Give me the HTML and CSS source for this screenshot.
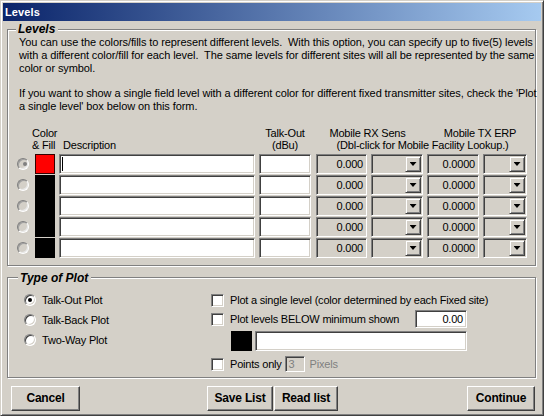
FILE: index.html
```html
<!DOCTYPE html>
<html>
<head>
<meta charset="utf-8">
<link rel="stylesheet" href="styles.css">
</head>
<body>
<div class="window">
  <div class="titlebar">Levels</div>

  <div class="group g-levels">
    <div class="legend">Levels</div>
    <div class="intro">
      <p>You can use the colors/fills to represent different levels.&nbsp; With this option, you can specify up to five(5) levels<br>with a different color/fill for each level.&nbsp; The same levels for different sites will all be represented by the same<br>color or symbol.</p>
      <p class="p2">If you want to show a single field level with a different color for different fixed transmitter sites, check the 'Plot<br>a single level' box below on this form.</p>
    </div>

    <div class="hdr">
      <div class="h-color">Color<br>&amp; Fill</div>
      <div class="h-desc">Description</div>
      <div class="h-talk1">Talk-Out</div>
      <div class="h-talk2">(dBu)</div>
      <div class="h-rx">Mobile RX Sens</div>
      <div class="h-tx">Mobile TX ERP</div>
      <div class="h-dbl">(Dbl-click for Mobile Facility Lookup.)</div>
    </div>

    <div class="rows">
      <div class="radio dis"><span class="dot gray"></span></div>
      <div class="sw red"></div>
      <div class="field"><span class="caret"></span></div>
      <div class="field"></div>
      <div class="field ro rx">0.000</div>
      <div class="field combo"><span class="dd"></span></div>
      <div class="field ro">0.0000</div>
      <div class="field combo"><span class="dd"></span></div>

      <div class="radio dis"></div>
      <div class="sw join"></div>
      <div class="field"></div>
      <div class="field"></div>
      <div class="field ro rx">0.000</div>
      <div class="field combo"><span class="dd"></span></div>
      <div class="field ro">0.0000</div>
      <div class="field combo"><span class="dd"></span></div>

      <div class="radio dis"></div>
      <div class="sw join"></div>
      <div class="field"></div>
      <div class="field"></div>
      <div class="field ro rx">0.000</div>
      <div class="field combo"><span class="dd"></span></div>
      <div class="field ro">0.0000</div>
      <div class="field combo"><span class="dd"></span></div>

      <div class="radio dis"></div>
      <div class="sw"></div>
      <div class="field"></div>
      <div class="field"></div>
      <div class="field ro rx">0.000</div>
      <div class="field combo"><span class="dd"></span></div>
      <div class="field ro">0.0000</div>
      <div class="field combo"><span class="dd"></span></div>

      <div class="radio dis"></div>
      <div class="sw"></div>
      <div class="field"></div>
      <div class="field"></div>
      <div class="field ro rx">0.000</div>
      <div class="field combo"><span class="dd"></span></div>
      <div class="field ro">0.0000</div>
      <div class="field combo"><span class="dd"></span></div>
    </div>
  </div>

  <div class="group g-plot">
    <div class="legend legend2">Type of Plot</div>
    <div class="plot-left">
      <div class="opt"><span class="radio"><span class="dot"></span></span>Talk-Out Plot</div>
      <div class="opt"><span class="radio"></span>Talk-Back Plot</div>
      <div class="opt"><span class="radio"></span>Two-Way Plot</div>
    </div>
    <div class="plot-right">
      <div class="prow r1"><span class="cb"></span>Plot a single level (color determined by each Fixed site)</div>
      <div class="prow r2"><span class="cb"></span>Plot levels BELOW minimum shown<div class="field num">0.00</div></div>
      <div class="prow r3"><span class="sw2"></span><div class="field wide"></div></div>
      <div class="prow r4"><span class="cb"></span>Points only<div class="field px">3</div><span class="gray">Pixels</span></div>
    </div>
  </div>

  <div class="buttons">
    <div class="btn b-cancel">Cancel</div>
    <div class="btn b-save">Save List</div>
    <div class="btn b-read">Read list</div>
    <div class="btn b-cont">Continue</div>
  </div>
</div>
</body>
</html>
```

FILE: styles.css
```css
* { box-sizing: border-box; }
html, body { margin: 0; padding: 0; }
body {
  width: 544px;
  height: 416px;
  overflow: hidden;
  background: #d4d0c8;
  font-family: "Liberation Sans", Arial, sans-serif;
  font-size: 11px;
  letter-spacing: -0.2px;
  color: #000;
}
.window {
  width: 544px;
  height: 416px;
  border: 1px solid;
  border-color: #d4d0c8 #404040 #404040 #d4d0c8;
  box-shadow: inset 1px 1px #fff, inset -1px -1px #808080;
  padding: 2px;
  display: flex;
  flex-direction: column;
}
.titlebar {
  height: 18px;
  flex: none;
  background: linear-gradient(to right, #0a246a, #a6caf0);
  color: #fff;
  font-weight: bold;
  font-size: 11px;
  letter-spacing: 0.1px;
  line-height: 18px;
  padding-left: 2px;
}
.group {
  position: relative;
  flex: none;
  width: 529px;
  margin-left: 4px;
  border: 1px solid #808080;
  box-shadow: inset 1px 1px #fff, 1px 1px #fff;
}
.legend {
  position: absolute;
  top: -8px;
  left: 8px;
  padding: 0 3px 0 2px;
  background: #d4d0c8;
  font-size: 12px;
  font-weight: bold;
  font-style: italic;
  line-height: 14px;
  letter-spacing: 0;
}
.legend2 { left: 10px; top: -7px; }

.g-levels {
  height: 237px;
  margin-top: 8px;
  padding: 6px 0 0 6px;
}
.intro { margin-left: 5px; }
.intro p {
  margin: 0;
  line-height: 13px;
  white-space: nowrap;
  letter-spacing: -0.09px;
}
.intro .p2 { margin-top: 12px; }

.hdr, .rows {
  display: grid;
  grid-template-columns: 17px 20px 196px 52px 52px 52px 52px 44px;
  column-gap: 4px;
}
.hdr {
  margin-top: 14px;
  grid-template-rows: 12px 12px;
  line-height: 12px;
  white-space: nowrap;
}
.h-color { grid-column: 2; grid-row: 1 / 3; margin-left: -3px; }
.h-desc { grid-column: 3; grid-row: 2; padding-left: 4px; }
.h-talk1 { grid-column: 4; grid-row: 1; text-align: center; }
.h-talk2 { grid-column: 4; grid-row: 2; text-align: center; }
.h-rx { grid-column: 5 / 7; grid-row: 1; text-align: center; padding-right: 3px; }
.h-tx { grid-column: 7 / 9; grid-row: 1; text-align: center; padding-left: 6px; }
.h-dbl { grid-column: 5 / 9; grid-row: 2; text-align: center; padding-left: 3px; }

.rows {
  margin-top: 3px;
  grid-auto-rows: 20px;
  row-gap: 1px;
}

.radio {
  width: 12px;
  height: 12px;
  border-radius: 50%;
  background: #fff;
  border: 1px solid;
  border-color: #808080 #fff #fff #808080;
  box-shadow: inset 1px 1px #404040, inset -1px -1px #d4d0c8;
  display: flex;
  align-items: center;
  justify-content: center;
  flex: none;
}
.rows .radio { align-self: center; justify-self: center; }
.radio.dis {
  background: #d4d0c8;
  box-shadow: inset 1px 1px #a0a0a0, inset -1px -1px #e8e8e8;
}
.dot {
  width: 4px;
  height: 4px;
  border-radius: 50%;
  background: #000;
}
.dot.gray { background: #808080; }

.sw { background: #000; }
.sw.red { background: #f00; border: 1px solid #300; }
.sw.join { box-shadow: 0 1px 0 #000; }

.field {
  height: 20px;
  background: #fff;
  border: 1px solid;
  border-color: #808080 #fff #fff #808080;
  box-shadow: inset 1px 1px #404040, inset -1px -1px #d4d0c8;
  white-space: nowrap;
}
.field.ro {
  background: #d4d0c8;
  text-align: right;
  padding-right: 3px;
  line-height: 18px;
}
.field.rx { width: 51px; justify-self: end; }
.caret {
  display: block;
  width: 1px;
  height: 14px;
  margin: 2px 0 0 2px;
  background: #000;
}
.combo {
  background: #d4d0c8;
  display: flex;
  justify-content: flex-end;
  padding: 1px;
}
.dd {
  width: 16px;
  height: 16px;
  border: 1px solid;
  border-color: #d4d0c8 #404040 #404040 #d4d0c8;
  box-shadow: inset 1px 1px #fff, inset -1px -1px #808080;
  display: flex;
  align-items: center;
  justify-content: center;
}
.dd::after {
  content: "";
  width: 7px;
  height: 4px;
  background: #000;
  clip-path: polygon(0 0, 100% 0, 50% 100%);
}

.g-plot {
  height: 101px;
  margin-top: 11px;
  padding: 12px 0 0 16px;
  display: flex;
  align-items: flex-start;
}
.plot-left { width: 187px; flex: none; }
.opt {
  height: 20px;
  display: flex;
  align-items: center;
  white-space: nowrap;
}
.opt .radio { margin-right: 6px; }
.plot-right {
  width: 256px;
  margin-top: 3px;
  display: flex;
  flex-direction: column;
}
.prow {
  display: flex;
  align-items: center;
  white-space: nowrap;
}
.r1 { height: 14px; }
.r2 { height: 18px; margin-top: 3px; }
.r3 { height: 20px; margin-top: 3px; }
.r4 { height: 16px; margin-top: 5px; }
.cb {
  width: 13px;
  height: 13px;
  flex: none;
  margin-right: 6px;
  background: #fff;
  border: 1px solid;
  border-color: #808080 #fff #fff #808080;
  box-shadow: inset 1px 1px #404040, inset -1px -1px #d4d0c8;
}
.field.num {
  width: 52px;
  height: 18px;
  margin-left: auto;
  text-align: right;
  padding-right: 3px;
  line-height: 16px;
}
.sw2 {
  width: 21px;
  height: 20px;
  margin-left: 20px;
  background: #000;
  flex: none;
}
.field.wide { flex: 1; margin-left: 3px; }
.field.px {
  width: 20px;
  height: 16px;
  margin-left: 3px;
  background: #d4d0c8;
  color: #808080;
  padding-left: 3px;
  line-height: 14px;
}
.gray { color: #808080; margin-left: 5px; }

.buttons {
  display: flex;
  margin-top: 8px;
}
.btn {
  height: 25px;
  border: 1px solid;
  border-color: #fff #404040 #404040 #fff;
  box-shadow: inset -1px -1px #808080;
  font-size: 12px;
  font-weight: bold;
  letter-spacing: -0.2px;
  line-height: 23px;
  text-align: center;
  white-space: nowrap;
}
.b-cancel { width: 69px; margin-left: 8px; }
.b-save { width: 66px; margin-left: 127px; }
.b-read { width: 64px; margin-left: 1px; }
.b-cont { width: 68px; margin-left: auto; margin-right: 6px; }
```
